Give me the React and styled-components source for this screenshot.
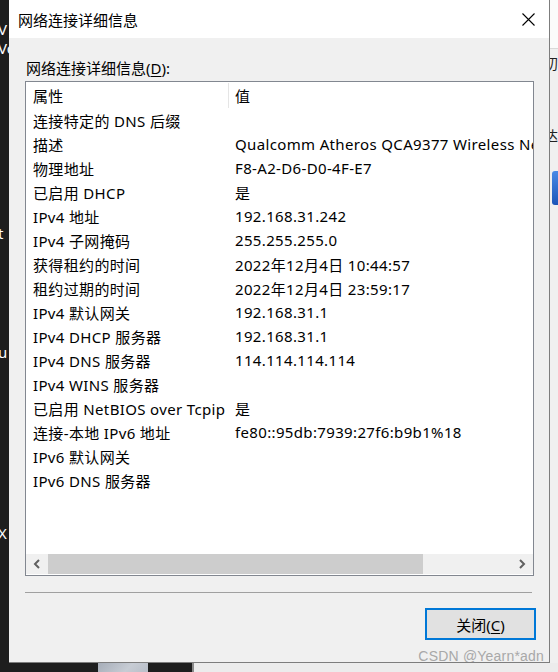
import React from 'react';
import styled, { createGlobalStyle } from 'styled-components';

const rows = [
    ['连接特定的 DNS 后缀', ''],
    ['描述', 'Qualcomm Atheros QCA9377 Wireless Network Adapter'],
    ['物理地址', 'F8-A2-D6-D0-4F-E7'],
    ['已启用 DHCP', '是'],
    ['IPv4 地址', '192.168.31.242'],
    ['IPv4 子网掩码', '255.255.255.0'],
    ['获得租约的时间', '2022年12月4日 10:44:57'],
    ['租约过期的时间', '2022年12月4日 23:59:17'],
    ['IPv4 默认网关', '192.168.31.1'],
    ['IPv4 DHCP 服务器', '192.168.31.1'],
    ['IPv4 DNS 服务器', '114.114.114.114'],
    ['IPv4 WINS 服务器', ''],
    ['已启用 NetBIOS over Tcpip', '是'],
    ['连接-本地 IPv6 地址', 'fe80::95db:7939:27f6:b9b1%18'],
    ['IPv6 默认网关', ''],
    ['IPv6 DNS 服务器', ''],
];

const GlobalStyle = createGlobalStyle`
    body {
        margin: 0;
        background: #1e1e1e;
        font-family: "Noto Sans", "Noto Sans CJK SC", sans-serif;
    }
`;

const Screen = styled.div`
    width: 558px;
    height: 672px;
    display: grid;
    grid-template-columns: 9px 541px 8px;
    grid-template-rows: 663px 9px;
    overflow: hidden;
`;

const LeftEdge = styled.div`
    background: #1e1e1e;
    color: #fff;
    font-size: 15px;
    display: flex;
    flex-direction: column;
    overflow: hidden;
`;

const Fragment = styled.div`
    margin-top: ${p => p.$mt}px;
    line-height: 17px;
    white-space: nowrap;
    margin-left: -2px;
`;

const RightEdge = styled.div`
    background: #f0f0f0;
    display: flex;
    flex-direction: column;
    font-size: 14px;
    overflow: hidden;
`;

const RightTop = styled.div`
    height: 48px;
    flex-shrink: 0;
    background: #fbfbfb;
    border-bottom: 1px solid #d9d9d9;
`;

const RightGlyph = styled.div`
    margin-top: ${p => p.$mt}px;
    line-height: 18px;
    color: #222;
    white-space: nowrap;
    margin-left: -6px;
`;

const RightIcon = styled.div`
    margin-top: 26px;
    height: 34px;
    flex-shrink: 0;
    background: linear-gradient(180deg, #4a8ae6, #1b55b8);
    border-radius: 3px 0 0 3px;
    margin-left: 2px;
`;

const BottomStrip = styled.div`
    grid-column: 1 / 4;
    display: grid;
    grid-template-columns: 98px 50px 44px 1fr;
`;

const Dark = styled.div`
    background: #1e1e1e;
`;

const Photo = styled.div`
    background: linear-gradient(135deg, #a6adb8, #c7ccd4 60%, #b8bec8);
`;

const Light = styled.div`
    background: #ececec;
    border-left: 2px solid #8a8a8a;
`;

const Dialog = styled.div`
    position: relative;
    min-width: 0;
    background: #f0f0f0;
    display: flex;
    flex-direction: column;
    border-right: 1px solid #7d7d7d;
    border-bottom: 1px solid #7d7d7d;
    box-sizing: border-box;
    overflow: hidden;
`;

const TitleBar = styled.div`
    height: 38px;
    flex-shrink: 0;
    background: #fff;
    display: flex;
    align-items: center;
    justify-content: space-between;
    padding-left: 9px;
    font-size: 15px;
    color: #000;
`;

const CloseButton = styled.div`
    width: 42px;
    height: 38px;
    display: flex;
    align-items: center;
    justify-content: center;
`;

const Body = styled.div`
    display: flex;
    flex-direction: column;
    padding: 0 13px 0 16px;
    min-width: 0;
`;

const Label = styled.div`
    margin-top: 20px;
    line-height: 20px;
    font-size: 15px;
    padding-left: 1px;
    color: #000;
`;

const ListBox = styled.div`
    margin-top: 3px;
    width: 509px;
    height: 495px;
    box-sizing: border-box;
    border: 1px solid #828790;
    background: #fff;
    display: flex;
    flex-direction: column;
    overflow: hidden;
`;

const Row = styled.div`
    height: ${p => (p.$header ? 26 : 24)}px;
    display: flex;
    align-items: center;
    font-size: 15px;
    letter-spacing: 0.35px;
    color: #000;
    white-space: nowrap;
    flex-shrink: 0;
    overflow: hidden;
`;

const NameCell = styled.div`
    width: 202px;
    padding-left: 7px;
    box-sizing: border-box;
    flex-shrink: 0;
`;

const ColDivider = styled.div`
    width: 1px;
    height: 25px;
    background: #e5e5e5;
    flex-shrink: 0;
    align-self: flex-start;
    margin-top: 1px;
`;

const ValueCell = styled.div`
    padding-left: ${p => (p.$header ? 6 : 7)}px;
    min-width: 0;
    overflow: hidden;
`;

const Filler = styled.div`
    flex: 1;
`;

const HScroll = styled.div`
    height: 20px;
    margin-bottom: 1px;
    flex-shrink: 0;
    background: #f0f0f0;
    display: flex;
    align-items: stretch;
`;

const ArrowButton = styled.div`
    width: 22px;
    display: flex;
    align-items: center;
    justify-content: center;
    flex-shrink: 0;
`;

const Track = styled.div`
    flex: 1;
    display: flex;
`;

const Thumb = styled.div`
    background: #cdcdcd;
`;

const Separator = styled.div`
    margin-top: 16px;
    height: 1px;
    width: 507px;
    background: #a0a0a0;
`;

const Footer = styled.div`
    display: flex;
    justify-content: flex-end;
    padding-top: 15px;
`;

const Button = styled.button`
    width: 111px;
    height: 32px;
    box-sizing: border-box;
    border: 2px solid #0078d7;
    background: #e1e1e1;
    font-family: inherit;
    font-size: 15px;
    color: #000;
    padding: 0;
`;

const Key = styled.span`
    text-decoration: underline;
    text-underline-offset: 2px;
`;

const Watermark = styled.div`
    position: absolute;
    right: 5px;
    bottom: -2px;
    font-size: 14px;
    color: #a8a8a8;
    font-family: "Liberation Sans", "Noto Sans", sans-serif;
    letter-spacing: 0.2px;
    white-space: nowrap;
`;

const Chevron = ({ dir }) => (
    <svg width="8" height="10" viewBox="0 0 8 10">
        <polyline
            points={dir === 'left' ? '6,1 2,5 6,9' : '2,1 6,5 2,9'}
            fill="none"
            stroke="#606060"
            strokeWidth="2"
        />
    </svg>
);

const App = () => (
    <>
        <GlobalStyle />
        <Screen>
            <LeftEdge>
                <Fragment $mt={21}>V</Fragment>
                <Fragment $mt={2}>Vo</Fragment>
                <Fragment $mt={168}>t</Fragment>
                <Fragment $mt={102}>u</Fragment>
                <Fragment $mt={164}>X</Fragment>
            </LeftEdge>
            <Dialog>
                <TitleBar>
                    <span>网络连接详细信息</span>
                    <CloseButton>
                        <svg width="13" height="13" viewBox="0 0 13 13">
                            <path d="M0.5 0.5 L12.5 12.5 M12.5 0.5 L0.5 12.5" stroke="#000" strokeWidth="1.1" />
                        </svg>
                    </CloseButton>
                </TitleBar>
                <Body>
                    <Label>
                        网络连接详细信息(<Key>D</Key>):
                    </Label>
                    <ListBox>
                        <Row $header>
                            <NameCell>属性</NameCell>
                            <ColDivider />
                            <ValueCell $header>值</ValueCell>
                        </Row>
                        {rows.map(([name, value]) => (
                            <Row key={name}>
                                <NameCell>{name}</NameCell>
                                <ValueCell>{value}</ValueCell>
                            </Row>
                        ))}
                        <Filler />
                        <HScroll>
                            <ArrowButton>
                                <Chevron dir="left" />
                            </ArrowButton>
                            <Track>
                                <Thumb style={{ width: 375 }} />
                            </Track>
                            <ArrowButton>
                                <Chevron dir="right" />
                            </ArrowButton>
                        </HScroll>
                    </ListBox>
                    <Separator />
                    <Footer>
                        <Button type="button">
                            关闭(<Key>C</Key>)
                        </Button>
                    </Footer>
                </Body>
                <Watermark>CSDN @Yearn*adn</Watermark>
            </Dialog>
            <RightEdge>
                <RightTop />
                <RightGlyph $mt={6}>叨</RightGlyph>
                <RightGlyph $mt={54}>达</RightGlyph>
                <RightIcon />
            </RightEdge>
            <BottomStrip>
                <Dark />
                <Photo />
                <Dark />
                <Light />
            </BottomStrip>
        </Screen>
    </>
);

export default App;
